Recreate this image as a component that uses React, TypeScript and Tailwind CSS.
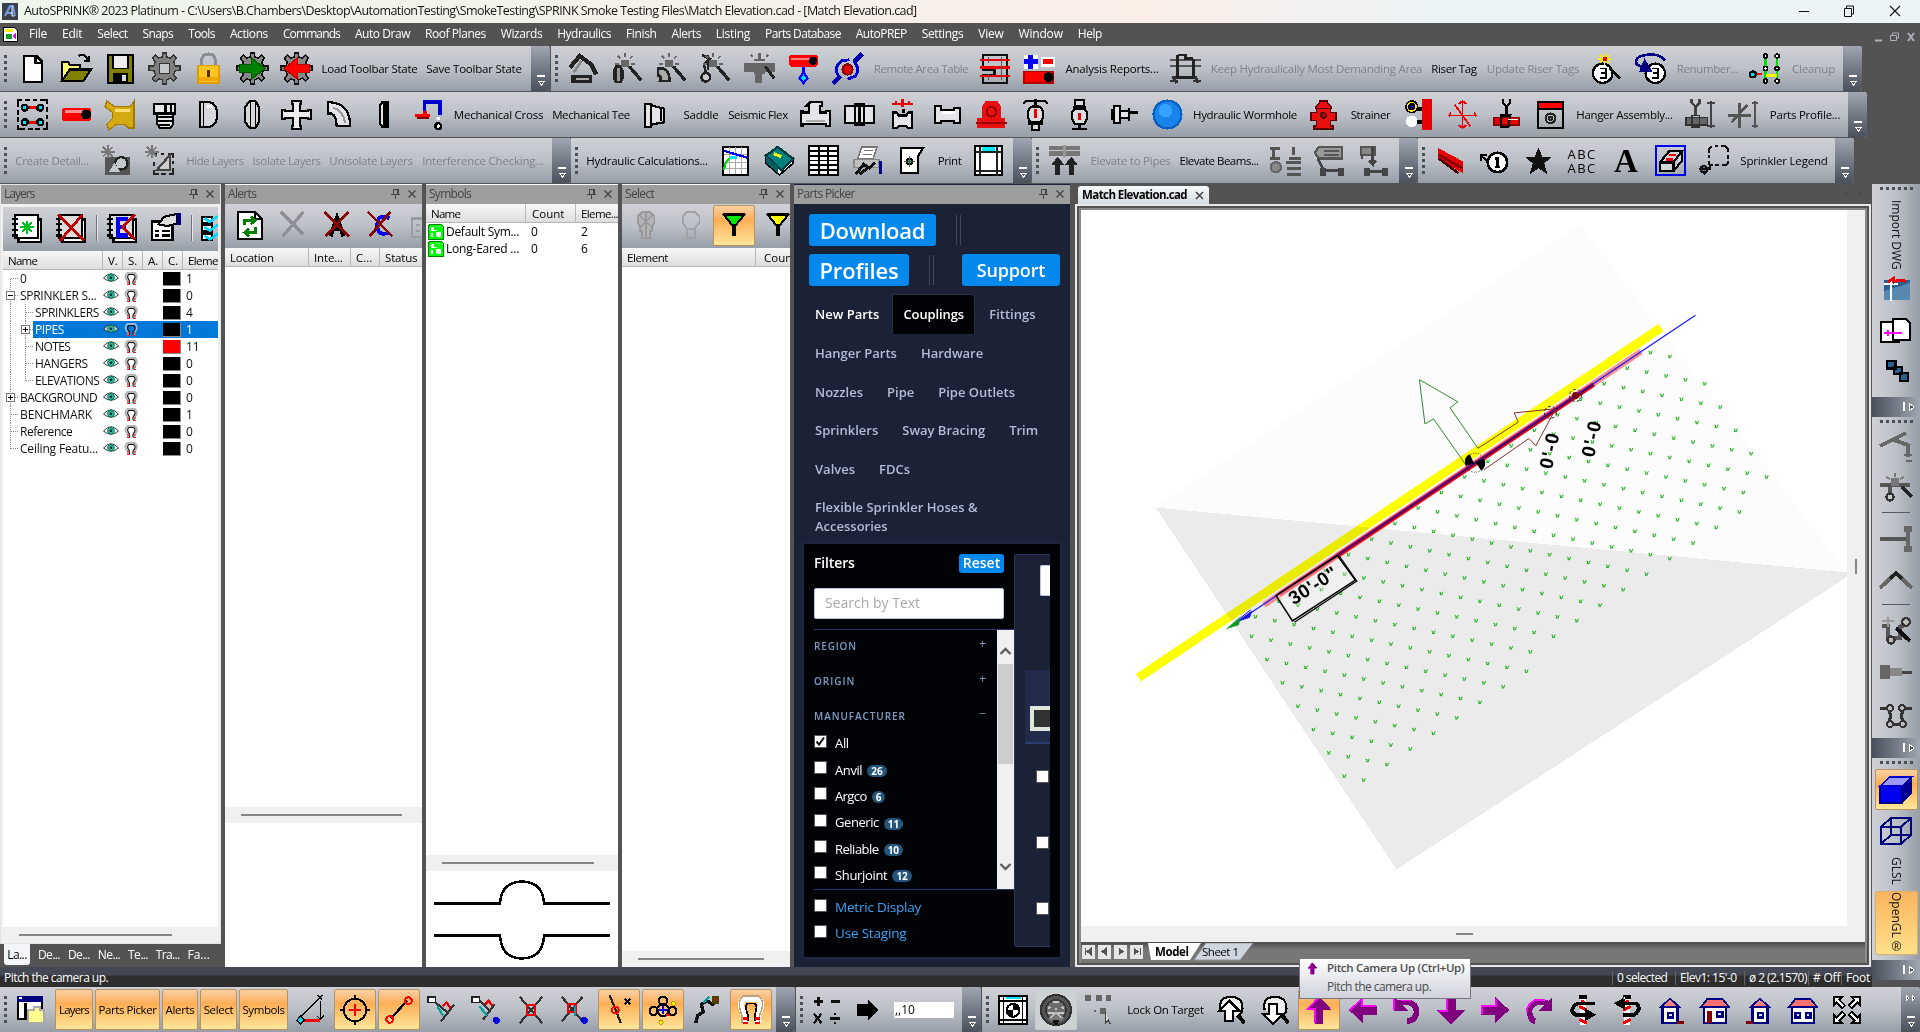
import { useLayoutEffect, useRef, useState } from "react";
import type { ReactNode } from "react";

type Layer = [string, string?, string?, number?];

const c = (x: number, y: number, r: number) =>
  `M${x - r} ${y}a${r} ${r} 0 1 0 ${2 * r} 0a${r} ${r} 0 1 0 ${-2 * r} 0z`;

const GEAR =
  "M7 0h2v2l2 .6 1.6-1.6 1.6 1.6L12.700 4.600l.9 2.100H16v2.400h-2.400l-.9 2.200 1.500 1.600-1.600 1.600-1.600-1.500L9 14v2H7v-2l-2-.7-1.700 1.500-1.500-1.600 1.500-1.900L2.500 9H0V6.700h2.500l.8-2.100-1.500-1.900 1.600-1.600L5 2.600 7 2z";
const ARROW_UP = "M8 1L14 7.500h-4V15H6V7.500H2z";
const WAND: Layer = ["M9 7L15 14", undefined, "#222", 1.7];
const SPARK: Layer = ["M5 4h3.500v3H5zM6.700 0v2M1.500 5.500h2M10 5.500h2M3 1.500l1.200 1.200M10.500 1.500L9.300 2.700", "#666", "#666", 0.9];

const ICONS: Record<string, Layer[]> = {
  new: [["M3.5 1.5h6.500l3 3v10.500h-9.500z", "#fff", "#000"], ["M9.500 1.500v3.500h3.500", undefined, "#000"]],
  open: [
    ["M.5 14V4.500h3l1 1.500h5.500v3", "#ffff70", "#000"],
    ["M.5 14.500l4-6h11l-4 6z", "#808000", "#000"],
    ["M9 1.500q4-1.500 5 2.500M12 4h3M14.500 1.500v3", undefined, "#000"],
  ],
  save: [
    ["M1.500 1h13v14.500h-13z", "#808000", "#000"],
    ["M4 1h8v7H4z", "#ececec", "#000", 0.8],
    ["M4 10.500h8v5H4z", "#000"],
    ["M9 11.500h2v3H9z", "#ddd"],
  ],
  gear: [[GEAR, "#808080", "#333", 0.7], ["M5.500 5.500h5v5h-5z", "#c5c8cd", "#333", 0.8]],
  lock: [
    ["M4.500 8V4q0-3.500 3.500-3.500t3.500 3.500v4", undefined, "#8a9096", 1.6],
    ["M2.500 6.500h11v9h-11z", "#ffc522", "#e39a00", 0.8],
    ["M3 13.500h10", undefined, "#f0a800", 2],
    ["M8 9v3.500", undefined, "#553300", 1.4],
  ],
  gearIn: [[GEAR, "#888", "#111", 0.8], ["M1.500 6h6V2.500L14.500 8 7.500 13.500V10h-6z", "#008000", "#005500", 0.6]],
  gearOut: [[GEAR, "#888", "#111", 0.8], ["M14.500 6h-6V2.500L1.500 8l7 5.500V10h6z", "#ff0000", "#b00000", 0.6]],
  crane: [
    ["M1 7.500L6 1.500l6 4.500 2.500 5", undefined, "#222", 2.2],
    ["M1.500 11.500h11v4h-11z", "#222"],
    ["M4 13.500h7", undefined, "#aaa", 1.2],
    ["M3 10L7 4", undefined, "#888", 1.4],
  ],
  wandOval: [["M2 7h2.500v8H2zM2 7l-1 2v4l1 2M4.500 7l1 2v4l-1 2", "#999", "#222"], SPARK, WAND],
  wandElbow: [["M1 8q6-1 6 6.500H2q1-3-1-3z", "#aaa", "#222", 1.4], SPARK, WAND],
  wandDrop: [["M1 1l4 2-3 3 1 4M4 1v8", undefined, "#222", 1.2], [c(3, 12.500, 2.200), "#ccc", "#222", 1.4], SPARK, WAND],
  wandTee: [["M0 5h16v5h-5v1H9.500v4.500h-4V11H5v-1H0z", "#666"], ["M5 3.500h6M8 0v4M3.500 1l1 1M12.500 1l-1 1", undefined, "#666"], ["M11 7l4.500 6", undefined, "#222", 1.5]],
  pipeDrop: [
    ["M1.500 1h13l1 1v4l-1 1h-13l-1-1V2z", "#f00"],
    ["M1.500 3h10", undefined, "#ff8080", 1],
    [c(13, 4, 2.200), "#000"],
    ["M8 7v5", undefined, "#00f", 1.2],
    ["M8 10l2 3-2 2.500-2-2.500z", "#00d8ff", "#00f"],
  ],
  blueHub: [
    ["M.5 15.500L4.500 12M11.500 4.500L15.500 .5", undefined, "#0000b0", 2.2],
    ["M4 12.500Q0 8 5 4l4-.5M11 4q4 4 1 8l-4 1.500", undefined, "#0000d0", 1.5],
    [c(8, 8.500, 2.600), "#e00000", "#800"],
  ],
  redTable: [
    ["M1.500 1h12.500v14.500H1.500v-4h6v-3h-6z", undefined, "#111", 1.4],
    ["M0 3.500h15.500M0 7.500h15.500M0 12h15.500", undefined, "#e00", 1.2],
    ["M4.500 2v3M11 2v12M4.500 11v3", undefined, "#555", 0.6],
  ],
  plusPipe: [
    ["M0 1h7v7H0zM9 2h7v5H9z", "#fff"],
    ["M3.500 1v7M0 4.500h7", undefined, "#00f", 2.400],
    ["M10 4.500h5", undefined, "#f00", 2.400],
    ["M0 9.500h15v6H0z", "#f00", "#a00", 0.7],
    [c(12.700, 12.500, 2.600), "#000"],
  ],
  grayHead: [
    ["M0 3.500h16M0 6.500h16", undefined, "#555", 1],
    ["M4 1v11M12 3v9M4 1h4v2h4M1 12.500h13", undefined, "#222", 1.4],
    ["M1.500 12l2 3.500M13 12l1.500 3.500M0 14.500h4M12 14.500h4", undefined, "#333", 1.4],
  ],
  tag3wand: [
    [c(6, 10.500, 5), "#fff", "#000", 1.2],
    ["M4.500 8h3v5h-3M5 10.500h2.500", undefined, "#000", 1],
    ["M10 8l5 5", undefined, "#111", 1.5],
    ["M7 0v6M3.500 3h7M4.500 1l5 4M9.500 1l-5 4", undefined, "#ffef00", 0.9],
    ["M6 2h2v2H6z", "#e00"],
  ],
  tag3loop: [
    [c(10.500, 10.500, 5), "#fff", "#000", 1.2],
    ["M9 8h3v5H9M9.500 10.500H12", undefined, "#000", 1],
    ["M15.500 4Q13 0 6 1T1 6l5 2.500", undefined, "#000080", 1.4],
    ["M5 4l3 5H3z", "#000080", "#000080"],
  ],
  net: [
    ["M8 2v13M14 2v13", undefined, "#00e000", 1.1],
    ["M1 11h5", undefined, "#f00", 1.2],
    ["M8 11.500h6", undefined, "#ffff00", 1.5],
    [c(8, 1.500, 1) + c(14, 1.500, 1) + c(8, 8, 1) + c(14, 8, 1) + c(8, 14.500, 1) + c(14, 14.500, 1), "#fff", "#000", 0.9],
    [c(1.500, 11, 1.500), "#00e5ff", "#000"],
  ],
  area: [
    ["M.5 2.500v-2h2M4 .5h2.500M8 .5h2.500M12 .5h3.500v2M15.500 4v2.500M15.500 8v2.500M15.500 12v3.500h-2M12 15.500H9.500M8 15.500H5.500M4 15.500H.5v-2M.5 12V9.500M.5 8V5.500M.5 4V2", undefined, "#000", 1.1],
    ["M3 4.500h10M3 12h10", undefined, "#e00", 1.8],
    [c(4, 4.500, 1.500) + c(12, 4.500, 1.500) + c(4, 12, 1.500) + c(12, 12, 1.500), "#00e5ff", "#000"],
  ],
  redPipe: [["M1.500 4.500h13l1 1v5l-1 1h-13l-1-1v-5z", "#f00"], ["M2 6.500h10", undefined, "#ff9090", 1.2], [c(13, 8, 2.600), "#000"]],
  yellowTee: [["M1 1l4 3h8l2-3v14h-3l-2-2H6l-4 3-1-3 3-3V7L0 4z", "#d4a912", "#a07a00", 0.6], ["M5 6h8", undefined, "#ffe070", 1.5]],
  cap: [
    ["M4 7.500v5l1.500 2.500h5.500l1.500-2V7.500z", "#e8e8e8", "#000", 0.9],
    ["M2.500 2.500h11v5h-11z", "#e8e8e8", "#000", 1.2],
    ["M8.500 2.500v5M11.500 2.500v5", undefined, "#000"],
    ["M4.500 9.500h8M4.500 11.500h8M5 13.500h6", undefined, "#000", 1],
  ],
  dshape: [["M3.500 1.500h5q4 1 4 6.500t-4 6.500h-5z", "#d5d7db", "#000"], ["M5.500 2v12", undefined, "#000", 0.8], ["M7 4h3", undefined, "#fff", 1.4]],
  oval: [["M6.500 1h3l2 3.500v7l-2 3.500h-3L4 11.500v-7z", "#d5d7db", "#000"], ["M7 1v14M9.500 1v14", undefined, "#000", 0.9]],
  cross: [["M5.500 1h5v1.500h-.5V6H14V5.500h1.500v5H14V10h-4v4h.5v1.500h-5V14H6v-4H2v.5H.5v-5H2V6h4V2.500h-.5z", "#ededf0", "#000"]],
  elbow: [["M1.500 1.500h2v.500q8 0 9.500 10v2h-7q0-5-2.500-6.500h-2z", "#e4e5e8", "#000"], ["M4 4.500q5 1 6.500 8", undefined, "#999", 1]],
  disc: [["M7 1.500h2.500v13H7l-1.500-2v-9zM8 2v12", "#e6e6e8", "#000"]],
  swing: [
    ["M6 7V1.500h8V8", undefined, "#00c", 1.900],
    ["M1 8.500h8M6 6v4", undefined, "#e00", 2],
    ["M8 10L2 10", undefined, "#800000", 1],
    [c(13, 10, 1), "#fff"],
    [c(13, 14, 1.500), "#fff", "#000"],
  ],
  reducer: [["M1.500 2.500h3l1 1 6 1.500v7l-6 1-1 1.500h-3z", "#e4e5e8", "#000"], ["M4.500 3v11M10 4.500v7", undefined, "#000"]],
  teeFit: [["M5.500 1.500h6v2h-1V7h3V6h2v8h-2v-1h-12v1h-1V6h1v1h3V3.500h-1z", "#e4e5e8", "#000"], ["M3 11.500h10", undefined, "#aaa"]],
  coupling: [["M.5 3.500h15v9H.5z", "#e4e5e8", "#000"], ["M5.500 2.500h5v11h-5zM8 3v10", undefined, "#000"]],
  valveR: [["M2.500 7h2l1 1.500h4l1-1.500h2v8h-2l-1-1H5.500l-1 1H2.500z", "#e4e5e8", "#000"], ["M8 5v2", undefined, "#000"], ["M2 2.500h11M4 1v2M7.500 0v4M11 1v2", undefined, "#e00", 1.1]],
  nipple: [["M1.500 3.500h3v2h7v-1h3v8h-3v-1h-7v1h-3z", "#e4e5e8", "#000"], ["M5 7h7", undefined, "#fff"]],
  redValve: [["M3 4l2-3h6l2 3v6h2v5H.500v-5H3z", "#e81010"], [c(8, 6.500, 2.500), undefined, "#900"], ["M0 12.500h16", undefined, "#900", 1.2]],
  headA: [
    ["M1.500 2.500l1.500-1.500h10l1.500 1.500M8 0v3M6 3.500h4", undefined, "#000"],
    ["M5.500 4q-3 4 0 8h5q3-4 0-8zM4.500 12h7v1h-7zM6 13h4v3H6z", "#dcdde0", "#000"],
    ["M8 5v5", undefined, "#e00", 1.7],
  ],
  headB: [
    ["M5.500.500h5v3h-5zM4.500 4h7M5.500 5q-3 3 0 8h5q3-5 0-8zM4 15.500h8M8 13v2", "#dcdde0", "#000"],
    ["M8 7v4", undefined, "#e00", 1.7],
  ],
  headC: [["M3 3.500h3v9H3zM2 5v6M6 6h5v4H6zM11 4.500v7M11 7h4.500", "#e4e5e8", "#000"]],
  ball: [[c(8, 8, 7.200), "#1684ea", "#0a5fc0"], [c(7, 6, 3.500), "#35a0ff"]],
  hydrant: [["M6 1h4v1l2 2v1H4V4l2-2zM4.500 5h7v2h3v4h-3v3h1.500v1.500h-10V14h1.500v-3h-3V7h3z", "#e80f0f", "#500", 0.8], [c(8, 8.500, 1.500), "#a00", "#300", 0.6]],
  tower: [
    ["M10 0h5v16h-5z", "#e80000"],
    ["M10 5H6M10 12H6", undefined, "#000", 2],
    [c(4.500, 4, 3), "#ffe400", "#000", 0.8],
    [c(4.500, 4, 1.300), "#00f", "#000"],
    [c(4.500, 11.500, 3), "#fff"],
  ],
  redCross: [["M8 1v14M1 8.500h14M4 3l8 11M6 2.500l2-1.500 2 1.500M2 7L1 9M14 7l1 2M6 13.500l2 1.500 2-1.500", undefined, "#e00", 0.9]],
  hangerRed: [
    ["M8 8V4M6 0v2l2 2 2-2V0", undefined, "#000", 1.1],
    ["M1.500 9.500h13v4h-13z", "#e80000", "#800", 0.7],
    ["M5 8.500h5l-1 6H5z", undefined, "#000", 1.1],
    ["M9 10.500h5", undefined, "#fff", 0.8],
  ],
  hangerBox: [["M1.500 1.500h13v13.500h-13z", undefined, "#000", 1.3], ["M2 2h12v2.500H2z", "#f00"], ["M2 5h12", undefined, "#000"], [c(8, 10, 2.500) + c(8, 10, 0.800), undefined, "#222"]],
  hangerGray: [
    ["M6 8V4M4 0v2l2 2 2-2V0M14 1v14M12 2h4M12 14h4", undefined, "#444", 1.3],
    ["M1 9.500h11v4H1z", "#666", "#333", 0.7],
    ["M4 8.500h4v6H4z", undefined, "#333", 1],
  ],
  crossGray: [["M6 2v13M0 8.500h12M2 12l8-9M14 1v14M12.500 2h3M12.500 14h3", undefined, "#555", 1.4]],
  shot: [["M2 6h13v9.500H2z", "#555"], [c(10.500, 9.500, 3.200), "#c4c7cc", "#222"], ["M4 14l3-5 3 5z", "#c4c7cc"], ["M3.500 0v6.500M0 3.500h7M1 1l5 5M6 1L1 6", undefined, "#777", 1]],
  shotSel: [["M4 4.500h2M8 4.500h2M12 4.500h2.500v2M14.500 8v2M14.500 12v3h-2M11 15H8.500M7 15H4.500v-2M4.500 11V9", undefined, "#222", 1.2], ["M6 13l7-8v8z", "#ccc", "#444"], ["M3.500 0v6.500M0 3.500h7M1 1l5 5M6 1L1 6", undefined, "#777", 1]],
  chart: [
    ["M1.500 1h13v14.500h-13z", "#fff", "#000", 1],
    ["M2 5h12M2 9h12M2 12h12M5 1v14M8 1v14M11 1v14", undefined, "#aaa", 0.6],
    ["M2 3l12 3.500", undefined, "#00f", 1.2],
    ["M2 13l1-4 2-2", undefined, "#00e000", 1.2],
    ["M5 6.500h4", undefined, "#00e5ff", 1.2],
  ],
  book: [["M1 5.500v4l7 6 7-6V7l-6 6z", "#f0f0f0", "#000", 0.9], ["M1 5.500l6-4.500 8 6-6 6z", "#008080", "#003c3c"], ["M1 5.500v3.500l6 5.500V11z", "#006060"], ["M5 4.500l4 1.500", undefined, "#ffff00", 1.6]],
  sheet: [["M.5.5h15v15H.5z", "#fff", "#000", 1.3], ["M0 3h16M0 5.500h16M0 8h16M0 10.500h16M0 13h16M5.500 0v16M10.500 0v16", undefined, "#000", 1]],
  printer: [
    ["M5 1h8l-2 6H3z", "#fff", "#777", 0.8],
    ["M6 3h5M5.500 5h5", undefined, "#777", 0.6],
    ["M1 7.500h13v4H1z", "#c0c0c0", "#888", 0.8],
    ["M2 15l4-5 3 2 3-3M4 15l4-3", undefined, "#111", 1.6],
    ["M14.500 8v7", undefined, "#000080", 1.5],
  ],
  plan: [["M2.500 1.500H14l-2.500 4V14.500h-9z", "#fff", "#000"], [c(7, 8.500, 1.500), "#00c8c8", "#000", 0.8], ["M7 5.500v6M4 8.500h6", undefined, "#553", 0.5]],
  print: [["M1 .5h14v15H1z", "#fff", "#000", 1.4], ["M4.500 1h7v2h-7z", "#00e5ff"], ["M1 3.500h14M3.500 1v15M12.500 1v15M1 13.500h14", undefined, "#222", 0.8]],
  lifts: [["M0 1.500h16M0 4.500h16", undefined, "#777", 2.400], ["M4.500 15.500V8M11.500 15.500V8", undefined, "#222", 2.800], ["M1 10.500l3.500-4.500 3.500 4.500zM8 10.500l3.500-4.500 3.500 4.500z", "#222"], ["M8 0v6", undefined, "#999"]],
  beamA: [["M0 2h5M0 7h5M10 7h6M8 9h8M9 12h7M9 15h7", undefined, "#555", 1.5], [c(3, 11.500, 2.600), "#888", "#666"], ["M2 2v4M12 1v4", undefined, "#555", 1.5]],
  beamB: [["M2.500 1h12v6h-12l-2-3z", "#999", "#555"], ["M5 3h8M5 5h8", undefined, "#555"], ["M2 7l3 6h9", undefined, "#444", 1.4], ["M3 12h3v4H3zM12.500 12h3v4h-3z", "#444"]],
  beamC: [["M1.500 1h7v4h-7z", "#888", "#555"], ["M2 5V7M7.500 1v9l-2-2M7.500 10l2-2M4 13.500h10", undefined, "#444", 1.4], ["M3 12h3v4H3zM12.500 12h3v4h-3z", "#444"]],
  ibeam: [["M1.500 1.500l13 7v6l-13-7z", "#e80000"], ["M2 5l12 7", undefined, "#800", 1.5], ["M2 7l10 7.500", undefined, "#400", 1.3]],
  callout: [[c(9.500, 9, 5), "#fff", "#000", 1.3], ["M5 9L1 5.500M1 8V5h3", undefined, "#000", 1], ["M8 7h1.500v4.500M8 11.500h3", undefined, "#000", 1.2]],
  star: [["M8 1.500l2 4.500h5l-4 3.500 1.500 5.500L8 12l-4.500 3L5 9.500 1 6h5z", "#111"]],
  iso: [["M.5 0v16M15.500 0v16", undefined, "#0000f0", 1.1], ["M0 .5h16M0 15.500h16", undefined, "#0000f0", 1.1], ["M2.500 9h7v4.500h-7zM2.500 9l5-6h6.500L9.500 9M14 3v5l-4.500 5.500", "#d4d6da", "#000"], ["M7 5h4M5.500 7.500h4", undefined, "#e00"]],
  cloud: [["M5 4V2l1.500-1.500M8 .5h2M11.500 .5h2l1.500 1.500v1.500M15 5v2M15 8.500v1l-1.500 1H12M10.500 10.500h-2M7 10.500H6L5 9.500V8M5 6.500V5", undefined, "#111", 1.100], [c(2.500, 12.500, 1.700), "#777", "#111"], ["M0 12.500h6M2.500 15l3.500-4", undefined, "#111", 1]],
  layerNew: [
    ["M3.500 3.500h12v12h-12z", "#fff", "#000"],
    ["M1.500 1h12.500v12.500H1.500z", "#fff", "#000"],
    ["M0 3h3M0 6h3M0 9h3M0 12h3", undefined, "#000"],
    ["M8 4v7M4.500 7.500h7M5.500 5l5 5M10.500 5l-5 5", undefined, "#00c020", 0.9],
  ],
  layerDel: [
    ["M3.500 3.500h12v12h-12z", "#fff", "#000"],
    ["M1.500 1h12.500v12.500H1.500z", "#ddd", "#000"],
    ["M0 3h3M0 6h3M0 9h3M0 12h3", undefined, "#000"],
    ["M1 1l14 13.500M14 1L2 15", undefined, "#c00000", 1.500],
  ],
  layerE: [
    ["M3.500 3.500h12v12h-12z", "#fff", "#000"],
    ["M1.500 1h12.500v12.500H1.500z", "#ddd", "#000"],
    ["M0 3h3M0 6h3M0 9h3M0 12h3", undefined, "#000"],
    ["M11 3H6v9h5M6 7.500h4", undefined, "#0000f0", 2.200],
    ["M8 7.500L15 1M8 7.500L15 14", undefined, "#c00000", 1.500],
  ],
  props: [
    ["M.5 4.500h11v10H.5z", "#fff", "#000"],
    ["M2 9.500h2M6 9.500h4M2 12h2M6 12h4", undefined, "#000"],
    ["M4 6l3-4 7-1.500v5L9 7z", "#ddd", "#000"],
    ["M15 0v6.500", undefined, "#000080", 2],
  ],
  checks: [["M.5 1.500h6v3.500H.5zM.5 6.500h6V10H.5zM.5 11.500h6V15H.5z", "#fff", "#000", 1.200], ["M2 2.500l3 2 5-3.500M2 7.500l3 2L10 6M2 12.500l3 2 5-3.500", undefined, "#00d8ff", 1.500]],
  refresh: [["M1.500 1h9l4 4v10.500h-13z", "#fff", "#000"], ["M10.500 1v4h4", undefined, "#000"], ["M5 8V5.500h5M11 9v3H6M8.500 3.500l2.500 2-2.500 2M7.500 10l-2.500 2L7.500 14", undefined, "#008000", 1.300]],
  xGray: [["M1 1l12 12M13 1L2 14", undefined, "#8d8f94", 1.7]],
  aX: [["M4.500 14L8 4l3.500 10M6 10h5", undefined, "#000", 2.200], ["M1.500 1l13 13M14 1L2 14", undefined, "#8b0000", 1.500]],
  cX: [["M12.500 4.500Q6 1.500 6 8t6.500 4", undefined, "#0000f0", 2], ["M1 1l13 13M13 1L2 14", undefined, "#8b0000", 1.500]],
  propsGray: [["M2.500 4.500h11v10h-11z", undefined, "#9a9da2", 1.200], ["M5 8h2M5 11h2M8 8h4", undefined, "#9a9da2"]],
  bulbA: [["M5 9L3.500 6.500v-3L6 1h4l2.500 2.500v3L11 9v2h-1v4H6v-4H5z", "#b4b5b8", "#999", 1], ["M5 3l6 6M11 3L5 9M8 1v14", undefined, "#999", 0.8]],
  bulbB: [["M5 9L3.500 6.500v-3L6 1h4l2.500 2.500v3L10 10H6zM6 10v5h4v-5", undefined, "#a0a2a6", 1]],
  funnelG: [["M2.500 2.500h11L9 8H7z", "#00e800", "#000"], ["M2 2h12", undefined, "#000"], ["M8 8v6", undefined, "#000", 2.200]],
  funnelY: [["M2.500 2.500h11L9 8H7z", "#ffff00", "#000"], ["M2 2h12", undefined, "#000"], ["M8 8v6", undefined, "#000", 2.200]],
  win: [["M.5 2h13v11H.5z", "#fff", "#000"], ["M0 .500h14v3H0z", "#000080"], ["M1 1.500h1.500", undefined, "#fff"], ["M4.500 4v9", undefined, "#000"], ["M6 8h3V6.500h3.500V8h2v7H6z", "#ffff90", "#aaa", 1.100]],
  tri: [["M2 12L12 2", undefined, "#000", 0.9], ["M13 3v9", undefined, "#000", 0.9], ["M3 13.500h10", undefined, "#f00", 1.300], ["M2.500 11l2 2.500-2 2-2-2z", "#00d8e8", "#000", 0.7], ["M11.500 0l2.500 2.500M14 0l-2.500 2.500M11 11l2 2 2-2", undefined, "#000", 0.7]],
  centre: [[c(8, 8, 6), undefined, "#000", 1.100], ["M8 5v6M5 8h6", undefined, "#f00", 1.200], ["M8 0v2M8 14v2M0 8h2M14 8h2", undefined, "#000", 0.8]],
  ends: [["M3.500 12.500l9-9.500", undefined, "#000", 1.200], [c(3, 13, 1.800) + c(13, 3, 1.800), undefined, "#f00", 1.100]],
  perp: [["M4 4l6 5M7 14l7-9", undefined, "#333", 1.200], ["M5 6l3 5", undefined, "#00a0a0", 1.200], ["M8 6l2-2 2 3", undefined, "#e00"], ["M0 1h4v3H0z", "#fff", "#222", 0.8]],
  perpB: [["M4 3l5 5M6 13l6-8", undefined, "#333", 1.200], ["M4 6l4 5", undefined, "#00a0a0", 1.200], ["M7 5l2-2 2 3", undefined, "#e00"], ["M0 1h4v3H0z", "#fff", "#222", 0.8], [c(13, 13.500, 1.800), "#0000e0"]],
  inter: [["M2 1l12 14M14 1L2 15", undefined, "#333", 1.200], ["M6 5.500h4v5H6z", undefined, "#e00", 1.200]],
  interB: [["M1 1l11 13M12 1L1 14", undefined, "#333", 1.200], ["M4.500 5h4v4h-4z", undefined, "#e00", 1.100], ["M8 11V6", undefined, "#00a0a0"], [c(13, 13.500, 1.800), "#0000e0"]],
  near: [["M3 0l6 15", undefined, "#222", 1.200], [c(6, 8, 1.800), undefined, "#f00", 1.100], ["M11 2l3 3M14 2l-3 3", undefined, "#000", 0.9]],
  quad: [[c(8, 8, 3.200), undefined, "#000"], [c(8, 3, 2.200) + c(3, 8.500, 2.200) + c(13, 8.500, 2.200), undefined, "#000"], ["M6 8h4M8 6v4", undefined, "#00f"], [c(13.500, 4.500, 1.200) + c(7, 14.500, 1.200), "#ffe800", "#a90", 0.500], ["M9.500 10.500h2", undefined, "#e00"]],
  poly: [["M2 15l1-4 3-2-1-4 3-2 3 2 2-3", undefined, "#111", 1.800], ["M6 4l3-3", undefined, "#00a0a0"], ["M11 1h3v3h-3z", "#a02010", "#440"]],
  magnet: [["M4.500 15V11Q1 4 4.500 1.800h7q3.500 2.500 0 9.200v4", undefined, "#fff", 3.400], ["M3.200 15v-4Q0 3 4 .500h8q4 2.500 .500 10.500v4", undefined, "#b9a080", 0.800], ["M6.500 14v-3Q4 5 6.500 4.500h3q2.500.500 .500 6.500v3", undefined, "#000", 0.900], ["M3.500 12.500h3M3.500 15h3M10 12.500h3M10 15h3", undefined, "#e00", 1.200]],
  math: [["M1 3.500h5M3.500 1v5M10 3.500h5M1 10l4 5M5 10l-4 5M9.500 12.500h5.500", undefined, "#111", 1.200], [c(12.200, 10, 0.600) + c(12.200, 15, 0.600), "#111"]],
  right: [["M2.500 5.500h6v-2L13 8l-4.500 4.500v-2h-6z", "#000", "#000"]],
  target: [["M.5.500h15v15H.5z", "#fff", "#000", 1.300], ["M4 1h8v1H4z", "#00e5ff"], ["M1 3.200h14M3 1v15M13 1v15M1 13.300h14", undefined, "#000", 0.8], [c(8, 8.200, 3.400), "#fff", "#000", 1.200], ["M8 5v3.200h3.400A3.400 3.400 0 0 0 8 5zM8 11.500V8.200H4.600A3.400 3.400 0 0 0 8 11.500z", "#000"]],
  wheel: [[c(8, 8, 7.500), "#555", "#333"], [c(8, 8, 5), "#6c6c6c", "#333", 0.800], ["M8 8L4 12l1 1.500h6l1-1.500z", "#777"], ["M6.500 4h3M5 6.500l-1 1M11 6.500l1 1M4 9.500h3M9 9.500h3M8 7v1M8 9l-2.500 3M8 9l2.500 3", undefined, "#c8c8c8", 0.800], ["M6.500 13h3l-.5 2.500H7z", "#111"]],
  pick: [["M0 0h3v3H0zM6 0h3v3H6zM11 0h3v3h-3zM8 7h3v3H8z", "#666"], ["M5 8.500h1", undefined, "#666"], ["M11 9v6l1.500-1.500 1 2", "#ddd", "#444", 0.9]],
  magUp: [["M2.500 8Q1 1 8 1t6 8L11 12", "#f0f0f0", "#000"], ["M12 11l3 4", undefined, "#000", 2], ["M7 3l5.500 5.500H9V14H5V8.500H1.500z", "#fff", "#000"]],
  magDown: [["M2.500 8Q1 1 8 1t6 8L11 12", "#f0f0f0", "#000"], ["M12 11l3 4", undefined, "#000", 2], ["M7 15.500l5.500-5.500H9V5H5v5H1.500z", "#fff", "#000"]],
  aUp: [[ARROW_UP, "#800080", "#800080", 0.600], ["M8 1L2 7.500h4V15", undefined, "#f0f", 0.900]],
  aLeft: [["M1 8L7.500 2v4H15v4.500H7.500V14z", "#800080", "#800080", 0.800], ["M15 6H7.500V2L1 8", undefined, "#f0f", 0.900]],
  aDown: [["M8 15l6.500-6.500H10V1H6v7.500H1.500z", "#800080", "#800080", 0.800], ["M6 1v7.500H1.500", undefined, "#f0f", 0.900]],
  aRight: [["M15 8L8.500 2v4H1v4.500h7.500V14z", "#800080", "#800080", 0.800], ["M1 10V6h7.500V2", undefined, "#f0f", 0.900]],
  aCcw: [["M3 4h6q4.500 1 4 5.500-.500 4-5 4.500", undefined, "#800080", 3], ["M1 1v7.500h7.500z", "#800080"], ["M1 8V1M5 3h5", undefined, "#f0f", 0.900]],
  aCw: [["M13 4H7Q2.500 5 3 9.500q.500 4 3 4.500", undefined, "#800080", 3], ["M15 1v7.500H7.500z", "#800080"], ["M11 2.500H6Q1.500 5 1.500 9", undefined, "#f0f", 0.900]],
  spinA: [["M8 0v16", undefined, "#fff", 3], ["M7 3l3 2M6 6l4 2M6 13l4 2", undefined, "#f00", 1.600], ["M14.500 4.500H5Q0 8 4 10.500h5", undefined, "#000", 2], ["M9 7l6 3.500-6 3.500zM6 0h4v2H6z", "#000"]],
  spinB: [["M8 0v16", undefined, "#fff", 3], ["M9 3L6 5M10 6L6 8M10 13l-4 2", undefined, "#f00", 1.600], ["M6 10.500h6q4-3 1-6H4", undefined, "#000", 2], ["M7 1L1 4.500 7 8zM6 0h4v2H6z", "#000"]],
  homeA: [["M3.500 6.500h8V15h-8z", "#fff", "#000080", 1.200], ["M2.500 6.500L7.500 2l5 4.500z", "#ff8080", "#000080", 1], ["M6.500 9.500h2.500v2.500H6.500z", "#c8f0ff", "#000080"], ["M11 14.500h4", undefined, "#800000", 1.600]],
  homeB: [["M2 6.500h12V15H2z", "#fff", "#000080", 1.200], ["M.500 6.500L4 2h8l3.500 4.500z", "#ff7070", "#000080", 1], ["M3.500 8.500h3V15h-3z", "#800000"], ["M9 9h3v2.500H9z", "#c8f0ff", "#000080"]],
  homeC: [["M4.500 6.500h8V15h-8z", "#fff", "#000080", 1.200], ["M3.500 6.500L8.500 2l5 4.500z", "#ff8080", "#000080", 1], ["M7.500 9.500h2.500v2.500H7.500z", "#c8f0ff", "#000080"], ["M1 14.500h4", undefined, "#800000", 1.600]],
  homeD: [["M2 6.500h12V15H2z", "#fff", "#000080", 1.200], ["M.500 6.500L4 2h8l3.500 4.500z", "#ff7070", "#000080", 1], ["M4 9.500h2.500V12H4zM9.500 9.500h2.500V12H9.500z", "#c8f0ff", "#000080"]],
  expand: [
    ["M1 5.500V1h4.500L4 2.500 7 5.500 5.500 7 2.500 4zM15 5.500V1h-4.500L12 2.500 9 5.500 10.500 7l3-3zM1 10.500V15h4.500L4 13.500 7 10.500 5.500 9l-3 3zM15 10.500V15h-4.500l1.500-1.500-3-3L10.500 9l3 3z", "#fff", "#000", 0.900],
  ],
  dwg: [["M2 3.500h13v10H2z", "#2a5f92"], ["M2 9l13-4v8.500H2z", "#5688b0"], ["M5.500 3v11M2 5.500h7", undefined, "#fff", 1], ["M4 4.500l3-2v2q4-2 6 0", undefined, "#e00", 1.400]],
  pages: [["M.5 4h7l2 2v8h-9z", "#fff", "#000", 1], ["M6.500 2.500H13l2 2V13H6.500z", "#fff", "#000", 1.200], ["M2 9.500h9M4 8v3", undefined, "#f0f", 1.100]],
  cubes: [["M3 3h4.500v4H3zM6.500 6H11v4H6.500zM10 9.500h4v4h-4z", "#2a5f92", "#000", 1.100]],
  vArm: [["M0 7.500L13 1M6 4l9 3.500M14 7v6", undefined, "#666", 2], ["M12 12h4M13 15h3", undefined, "#666"]],
  vWand: [["M0 6h15M5 6v4", undefined, "#555", 1.900], [c(5, 12, 1.800), "#ccc", "#333"], ["M6 3h3v3H6zM7.500 0v2M3 2l2 1M12 2l-2 1", "#777", "#777", 0.800], ["M11 7l5 5", undefined, "#222", 1.800]],
  vTee: [["M0 8h13", undefined, "#555", 1.600], ["M14 4v8", undefined, "#666", 2], ["M12 3h4M12 13h4", undefined, "#666", 3]],
  vChev: [["M0 12l8-7.500 8 7.500", undefined, "#666", 2], ["M5 7.500l3-3 3 3", undefined, "#222", 2]],
  vMess: [["M1 5.500h3v6h6V6l4-2", undefined, "#555", 2.300], [c(13, 3.500, 1.900) + c(5.500, 12.500, 1.800), "#bbb", "#333"], ["M8 6.500l7 6.500", undefined, "#111", 2], ["M4 1v5M1 3h6", undefined, "#999"]],
  vJack: [["M0 4.500h5v7H0z", "#666"], ["M5 6h6v4H5z", "#888"], ["M11 8h5", undefined, "#444", 1.500]],
  vNodes: [["M0 4h4l1.500 4L4 12M16 4h-4l-1.500 4 1.500 4M4 12h8", undefined, "#333", 1.500], [c(5, 4, 1.600) + c(11, 4, 1.600) + c(5, 12, 1.600) + c(11.500, 12, 1.600), "#bbb", "#333"]],
  cube: [["M0 6h11v8.500H0z", "#0000f0", "#000080", 0.700], ["M0 6l5-4.500h11L11 6z", "#9a9af8", "#0000d0", 0.700], ["M16 1.500v8l-5 5V6z", "#000090"]],
  wire: [["M.5 6h10v8.500H.500zM5.500 1.500h10V10h-10zM.500 6l5-4.500M10.500 6l5-4.500M.500 14.500l5-4.500M10.500 14.500l5-4.500", undefined, "#00007a", 1]],
};

function Icon({ name, cls = "h-8 w-8" }: { name: string; cls?: string }) {
  return (
    <svg viewBox="0 0 16 16" className={`shrink-0 overflow-visible ${cls}`} shapeRendering="crispEdges">
      {ICONS[name].map(([d, f, s, w], i) => (
        <path key={i} d={d} fill={f ?? "none"} stroke={s ?? "none"} strokeWidth={w ?? 1.15} />
      ))}
    </svg>
  );
}

/* Text tightened or loosened so that its ink spans exactly w pixels. */
function Fit({ w, children, cls = "" }: { w: number; children: string; cls?: string }) {
  const ref = useRef<HTMLSpanElement>(null);
  const [ls, setLs] = useState(0);
  useLayoutEffect(() => {
    if (ref.current) setLs((w - ref.current.offsetWidth) / children.length);
  }, [w, children]);
  return (
    <span ref={ref} className={`inline-block shrink-0 whitespace-nowrap ${cls}`} style={{ letterSpacing: ls }}>
      {children}
    </span>
  );
}

type Item = string | { t: string; w: number; cell: number; off?: boolean };
const T = (t: string, w: number, cell: number, off = false): Item => ({ t, w, cell, off });

function Handle({ more }: { more?: boolean }) {
  return (
    <div className="ml-auto flex w-[19px] shrink-0 flex-col items-center justify-end self-stretch rounded-r-[3px] bg-linear-to-b from-[#a0a7b2] to-[#4a515c] pb-[3px]">
      {more && (
        <svg width="14" height="9" className="mb-[12px]" shapeRendering="crispEdges">
          <path d="M2 1v6l3-3zM8 1v6l3-3z" fill="#555" stroke="#fff" />
        </svg>
      )}
      <svg width="12" height="14" shapeRendering="crispEdges">
        <path d="M2 2h8" stroke="#fff" strokeWidth="2" />
        <path d="M3 7h7l-3.500 4z" fill="#555" stroke="#fff" />
      </svg>
    </div>
  );
}

const Grip = () => <div className="ml-[4px] h-[27px] w-[6px] shrink-0 border-l-[3px] border-dotted border-[#4b4f57]" />;

function Bar({ w, items, children, cls = "", more }: { w: string; items?: Item[]; children?: ReactNode; cls?: string; more?: boolean }) {
  return (
    <div className={`flex h-[45px] shrink-0 items-center overflow-hidden rounded-r-[3px] bg-linear-to-b from-[#cfd1d6] via-[#bcc0c7] to-[#979ea8] ${w} ${cls}`}>
      <Grip />
      {items?.map((it, i) =>
        typeof it === "string" ? (
          it === "ABC" ? (
            <div key={i} className="flex w-11 shrink-0 flex-col items-center text-[13px] leading-[14px]">
              <Fit w={29}>ABC</Fit>
              <Fit w={29}>ABC</Fit>
            </div>
          ) : it === "A" ? (
            <div key={i} className="flex w-11 shrink-0 justify-center font-['Liberation_Serif',serif] text-[33px] leading-8 font-bold">A</div>
          ) : (
            <div key={i} className="flex w-11 shrink-0 justify-center">
              <Icon name={it} cls="h-[31px] w-[31px]" />
            </div>
          )
        ) : (
          <div key={i} style={{ width: it.cell }} className={`flex shrink-0 justify-center ${it.off ? "text-[#7f8287]" : "text-black"}`}>
            <Fit w={it.w}>{it.t}</Fit>
          </div>
        ),
      )}
      {children}
      <Handle more={more} />
    </div>
  );
}

const MENU: [string, number][] = [
  ["File", 18], ["Edit", 20], ["Select", 30], ["Snaps", 31], ["Tools", 27], ["Actions", 38], ["Commands", 57], ["Auto Draw", 55],
  ["Roof Planes", 61], ["Wizards", 41], ["Hydraulics", 54], ["Finish", 31], ["Alerts", 29], ["Listing", 34], ["Parts Database", 76],
  ["AutoPREP", 51], ["Settings", 42], ["View", 25], ["Window", 44], ["Help", 24],
];

function PanelHead({ title, w }: { title: string; w: number }) {
  return (
    <div className="flex h-[19px] shrink-0 items-center bg-[#9c9f9e] pr-[5px] pb-[2px] pl-[3px] text-[12px] text-[#444]">
      <Fit w={w}>{title}</Fit>
      <svg className="ml-auto" width="26" height="12" fill="none" stroke="#444">
        <path d="M2.500 1.500h5v5h-5zM6.500 1.500v5M0 6.500h9M4.500 7v4" shapeRendering="crispEdges" />
        <path d="M17.500 2.500l7 7M24.500 2.500l-7 7" strokeWidth="1.400" />
      </svg>
    </div>
  );
}

const Col = ({ cls, children }: { cls: string; children?: ReactNode }) => (
  <div className={`flex shrink-0 items-center overflow-hidden border-r border-[#b9b9b9] pt-[2px] whitespace-nowrap ${cls}`}>{children}</div>
);

const HeadRow = ({ children }: { children: ReactNode }) => (
  <div className="flex h-[19px] shrink-0 overflow-hidden border-b border-[#b5b5b5] bg-linear-to-b from-[#f7f7f7] to-[#dedede] text-[11.5px] text-black">{children}</div>
);

const LAYERS: [string, number, string, string?][] = [
  ["0", 0, "1"], ["SPRINKLER S...", 0, "0", "-"], ["SPRINKLERS", 1, "4"], ["PIPES", 1, "1", "+"], ["NOTES", 1, "11"], ["HANGERS", 1, "0"],
  ["ELEVATIONS", 1, "0"], ["BACKGROUND", 0, "0", "+"], ["BENCHMARK", 0, "1"], ["Reference", 0, "0"], ["Ceiling Featu...", 0, "0"],
];
const LAYER_W = [6, 76, 64, 29, 35, 53, 64, 77, 72, 52, 78];

function LayerRow({ i }: { i: number }) {
  const [name, depth, count, box] = LAYERS[i];
  const sel = name === "PIPES";
  return (
    <div className="flex h-[17px] items-center">
      <svg width={depth ? 30 : 15} height="17" className="shrink-0" shapeRendering="crispEdges">
        <g stroke="#8a8a8a" strokeDasharray="1 1" fill="none">
          <path d={i === 0 ? "M7.500 9v8" : i === 10 ? "M7.500 0v9" : "M7.500 0v17"} />
          {!depth && <path d="M8 8.500h7" />}
          {depth > 0 && <path d={i === 6 ? "M22.500 0v9M23 8.500h7" : "M22.500 0v17M23 8.500h7"} />}
        </g>
        {box && (
          <g transform={`translate(${depth ? 18 : 3} 4)`}>
            <path d="M.5.5h8v8h-8z" fill="#fff" stroke="#777" />
            <path d={box === "+" ? "M2 4.500h5M4.500 2v5" : "M2 4.500h5"} stroke="#000" />
          </g>
        )}
      </svg>
      <div className={`flex h-[17px] grow items-center pl-[2px] ${sel ? "bg-[#0078d7] text-white" : "text-[#111]"}`}>
        <div className={`shrink-0 ${depth ? "w-[68px]" : "w-[83px]"}`}>
          <Fit w={LAYER_W[i]}>{name}</Fit>
        </div>
        <svg width="60" height="17" className="shrink-0">
          <path d="M.5 8Q8-.5 15.500 8Q8 14.500 .5 8z" fill={sel ? "#b8d4ec" : "#fff"} stroke="#333" />
          <circle cx="8" cy="7.700" r="3.400" fill="#35b494" stroke="#0a7a60" />
          <circle cx="8" cy="7.700" r="1.200" fill="#023" />
          <path d="M25 15V12Q20.500 6 24.500 3h7.500Q36 6 31.500 12v3" fill="none" stroke={sel ? "#8fb9dc" : "#b4b4b4"} strokeWidth="2" />
          <path d="M26.500 14v-3Q23 6.500 26 4.500h4.500Q34 6.500 30 11v3" fill="none" stroke="#111" strokeWidth="1.100" />
          <path d="M24 12h3M24 14.500h3M30 12h3M30 14.500h3" stroke="#d22" strokeWidth="1.200" />
        </svg>
        <div className={`h-[14px] w-[18px] shrink-0 border-r border-b border-[#888] ${name === "NOTES" ? "bg-[#f00]" : "bg-black"}`} />
        <span className="pl-[5px]">{count}</span>
      </div>
    </div>
  );
}

const MiniBar = ({ children }: { children: ReactNode }) => (
  <div className="flex h-[44px] shrink-0 items-center overflow-hidden bg-linear-to-b from-[#cfd1d6] via-[#bcc0c7] to-[#979ea8] pb-[2px]">{children}</div>
);

const Splitter = ({ w }: { w: string }) => (
  <div className="flex h-[16px] shrink-0 items-center bg-[#f0f0f0] pl-[16px]">
    <div className={`h-[2px] bg-[#868686] ${w}`} />
  </div>
);

const Check = ({ on }: { on?: boolean }) => (
  <span className="flex h-[13px] w-[13px] shrink-0 items-center justify-center border border-[#555] bg-white">
    {on && (
      <svg width="11" height="11" fill="none" stroke="#111" strokeWidth="2">
        <path d="M1.500 5.500l2.500 3 5-7" />
      </svg>
    )}
  </span>
);

const PARTS: [string, number][][] = [
  [["Hanger Parts", 82], ["Hardware", 62]],
  [["Nozzles", 48], ["Pipe", 27], ["Pipe Outlets", 77]],
  [["Sprinklers", 63], ["Sway Bracing", 83], ["Trim", 29]],
  [["Valves", 40], ["FDCs", 31]],
];

const MAKERS: [string, number, string?][] = [["All", 14], ["Anvil", 27, "26"], ["Argco", 32, "6"], ["Generic", 44, "11"], ["Reliable", 44, "10"], ["Shurjoint", 52, "12"]];

function PartsPicker() {
  return (
    <div className="flex h-[783px] w-[276px] flex-col bg-[#1b2236] pt-px">
      <PanelHead title="Parts Picker" w={58} />
      <div className="mt-[10px] flex h-8 items-center pl-[15px] text-white">
        <div className="flex h-8 w-[127px] items-center justify-center rounded-[3px] bg-[#0388ee] text-[22px] font-semibold"><Fit w={106}>Download</Fit></div>
        <div className="ml-[20px] h-[30px] w-[5px] border-x border-[#3e4657]" />
      </div>
      <div className="mt-2 flex h-8 items-center pl-[15px] text-white">
        <div className="flex h-8 w-[100px] items-center justify-center rounded-[3px] bg-[#0388ee] text-[22px] font-semibold"><Fit w={79}>Profiles</Fit></div>
        <div className="ml-[20px] h-[30px] w-[5px] border-x border-[#3e4657]" />
        <div className="ml-[28px] flex h-8 w-[98px] items-center justify-center rounded-[3px] bg-[#0388ee] text-[18px] font-semibold"><Fit w={69}>Support</Fit></div>
      </div>
      <div className="mt-[8px] flex h-[40px] items-center pl-[21px] text-[13px] font-semibold text-white">
        <Fit w={64}>New Parts</Fit>
        <div className="ml-[13px] flex h-[40px] w-[83px] items-center justify-center rounded-t-[3px] border border-b-0 border-[#2c3140] bg-[#020307]"><Fit w={61}>Couplings</Fit></div>
        <Fit w={46} cls="ml-[14px] text-[#b3bcd6]">Fittings</Fit>
      </div>
      <div className="pl-[9px] text-[13px] font-semibold text-[#b3bcd6]">
        {PARTS.map((row, i) => (
          <div key={i} className="flex h-[38.700px] items-center">
            {row.map(([t, w]) => (
              <span key={t} className="px-3"><Fit w={w}>{t}</Fit></span>
            ))}
          </div>
        ))}
        <div className="flex flex-col items-start px-3 pt-[9px] leading-[19px]">
          <Fit w={163}>Flexible Sprinkler Hoses &amp;</Fit>
          <Fit w={73}>Accessories</Fit>
        </div>
      </div>
      <div className="mt-[8px] ml-[10px] flex h-[413px] w-[256px] shrink-0 bg-[#020307] shadow-[0_0_6px_#26314f]">
        <div className="flex w-[210px] shrink-0 flex-col pl-[10px]">
          <div className="mt-[10px] flex h-[19px] items-center text-[14px] text-white">
            <Fit w={41} cls="pb-[1px] font-semibold">Filters</Fit>
            <div className="mr-[10px] ml-auto flex h-[19px] w-[45px] items-center justify-center rounded-[3px] bg-[#0388ee] font-semibold"><Fit w={37}>Reset</Fit></div>
          </div>
          <div className="mt-[15px] flex h-[31px] w-[190px] items-center rounded-[2px] border border-[#bcc8e6] bg-white pl-[10px] text-[14px] text-[#a8a8a8]"><Fit w={95}>Search by Text</Fit></div>
          <div className="mt-[10px] flex h-[261px] border-y border-[#2a3663]">
            <div className="w-[183px] shrink-0 pt-[16px]">
              {([["REGION", 43, "+"], ["ORIGIN", 41, "+"], ["MANUFACTURER", 92, "−"]] as [string, number, string][]).map(([t, w, s], i) => (
                <div key={t} className={`flex items-center text-[10px] leading-none font-semibold text-[#7f9cc4] ${i < 2 ? "h-[35px] pb-[35px]" : "h-[0px]"}`}>
                  <Fit w={w}>{t}</Fit>
                  <span className="mr-[11px] ml-auto pb-[3px] text-[12px] font-normal">{s}</span>
                </div>
              ))}
              <div className="pt-[14px]">
                {MAKERS.map(([t, w, n], i) => (
                  <div key={t} className="flex h-[26.300px] items-center text-[13px] text-white">
                    <span className="pb-[3px]"><Check on={i === 0} /></span>
                    <Fit w={w} cls="mt-[2px] ml-[8px]">{t}</Fit>
                    {n && <span className="mt-[4px] ml-[5px] flex h-[12px] items-center rounded-full bg-[#24567c] px-[4px] text-[10px] font-bold">{n}</span>}
                  </div>
                ))}
              </div>
            </div>
            <div className="flex w-[17px] flex-col items-center bg-[#f0f0f0]">
              <svg width="17" height="34" fill="none" stroke="#606060" strokeWidth="2.400"><path d="M3.500 24l5-5 5 5" /></svg>
              <div className="h-[100px] w-[15px] bg-[#cdcdcd]" />
              <svg className="mt-auto" width="17" height="34" fill="none" stroke="#606060" strokeWidth="2.400"><path d="M3.500 9l5 5 5-5" /></svg>
            </div>
          </div>
          <div className="mt-[4px] text-[13.500px] text-[#3fa3f5]">
            <div className="flex h-[26px] items-center"><span className="pb-[3px]"><Check /></span><Fit w={86} cls="mt-[2px] ml-[8px]">Metric Display</Fit></div>
            <div className="flex h-[26px] items-center"><span className="pb-[3px]"><Check /></span><Fit w={71} cls="mt-[2px] ml-[8px]">Use Staging</Fit></div>
          </div>
        </div>
        <div className="mt-[10px] flex h-[393px] w-[36px] flex-col items-end rounded-l-[3px] border border-r-0 border-[#2a3560] bg-[#1b2236]">
          <div className="mt-[10px] h-[31px] w-[10px] rounded-l-[2px] border border-r-0 border-[#bcc8e6] bg-white" />
          <div className="mt-[74px] flex h-[74px] w-[25px] items-center justify-end border-b-2 border-[#2f3d70] bg-[#222b4b]">
            <div className="mt-[26px] h-[25px] w-[20px] border-[4px] border-r-0 border-[#dfe6dc] bg-[#303234]" />
          </div>
          <div className="flex w-[14px] flex-col gap-[53px] pt-[26px]"><Check /><Check /><Check /></div>
        </div>
      </div>
    </div>
  );
}

const ROWS: [number, number][] = [
  [0, 1], [0, 4], [0, 6], [0, 8], [0, 10], [0, 12], [0, 12], [0, 13], [0, 13], [0, 13], [0, 13], [0, 13], [0, 13], [0, 13], [0, 13], [0, 13],
  [0, 13], [0, 14], [1, 14], [3, 14], [5, 14], [7, 14], [9, 14], [11, 14], [13, 14],
];
const MARKS = ROWS.flatMap(([a, b], j) =>
  Array.from({ length: b - a + 1 }, (_, k) => [1652 + (a + k) * 19.4 - j * 23.3, 351.7 + (a + k) * 3.9 + j * 15.58]),
);

function Drawing() {
  return (
    <svg viewBox="1081 210 768 716" className="h-[716px] w-[768px] bg-white">
      <path d="M1156 507L1581 224L1849 573z" fill="#fcfcfc" />
      <g shapeRendering="crispEdges">
        <path d="M1138.500 678L1662.700 327" stroke="#ff0" strokeWidth="9" />
        <path d="M1156 507.400L1849 572.500V577L1397.300 870.200z" fill="#ebebeb" className="mix-blend-multiply" />
      </g>
      <path d="M1264.600 605L1642.500 351" stroke="#f88b8b" strokeWidth="6" />
      <path d="M1280 594.500L1595 384" stroke="#ee2b3e" strokeWidth="4.500" />
      <path d="M1338 555.600L1595 384" stroke="#e00018" strokeWidth="4" />
      <path d="M1234.800 624L1697 314.500" stroke="#1a1aff" strokeWidth="1.200" />
      <path d="M1338 555.600L1595 384" stroke="#500050" strokeWidth="1.400" />
      <path d="M1239 621l13-9.500-2 6zM1241 618l10-8" fill="#11e" stroke="#11e" />
      <path d="M1227 629l14-12-2 8z" fill="#0a9a20" stroke="#0a9a20" strokeWidth=".6" />
      <g stroke="#12b012" strokeWidth="1" fill="none">
        {MARKS.map(([x, y], i) => (
          <path key={i} d={`M${x - 2} ${y - 1}l1.500 .5l-.5 1.500M${x + 0.5} ${y + 1.500}l1.200-3M${x - 1.500} ${y + 1.500}h2.500`} />
        ))}
      </g>
      <path d="M1479 448L1451 407.500L1458.800 401.400L1420.300 379.200L1425.800 423.600L1434.500 418.600L1467.600 465.700" fill="none" stroke="#2f8a2f" />
      <path d="M1479 448L1519.400 421.700L1515.300 412.500L1557 408.300L1537 445.400L1530 438.200L1485 469.500" fill="none" stroke="#8a3030" />
      <g fill="none" stroke="#222">
        <circle cx="1476" cy="462.500" r="9.500" strokeDasharray="1 1.500" />
        <circle cx="1551.600" cy="412" r="6" strokeDasharray="3 2" />
        <circle cx="1576.800" cy="395" r="6" strokeDasharray="3 2" />
      </g>
      <circle cx="1576.800" cy="395" r="3.500" fill="#7a0010" />
      <path d="M1474.500 463L1467 465Q1465 457 1470.500 454.500zM1477 462L1485 459Q1487.500 465 1482.500 470z" fill="#000" stroke="#000" />
      <path d="M1276.600 595.800L1338 555.600L1356 580.100L1293 621z" fill="#fff" fillOpacity=".25" stroke="#000" strokeWidth="1.500" />
      <path d="M1340 556L1357.500 581L1295 622.500" fill="none" stroke="#000" strokeWidth="1.200" />
      <g className="font-['Liberation_Sans',sans-serif] text-[19px] font-bold" textAnchor="middle">
        <text transform="translate(1317 591) rotate(-33)" textLength="54">30'-0"</text>
        <text transform="translate(1557 452) rotate(-78)" textLength="36">0'-0</text>
        <text transform="translate(1599 440) rotate(-78)" textLength="36">0'-0</text>
      </g>
    </svg>
  );
}

const Btn = ({ children, w, on = true }: { children: ReactNode; w: string; on?: boolean }) => (
  <div className={`mx-px flex h-[41px] shrink-0 items-center justify-center rounded-[2px] border ${w} ${on ? "border-[#b9935a] bg-linear-to-b from-[#f9d0a4] via-[#fcae55] via-35% to-[#fee79a]" : "border-[#c7cdd0] bg-[#ccd2d4]"}`}>
    {children}
  </div>
);

const Cell = ({ name, w = "w-11" }: { name: string; w?: string }) => (
  <div className={`flex shrink-0 justify-center ${w}`}>
    <Icon name={name} cls="h-[30px] w-[30px]" />
  </div>
);

const VGrip = () => <div className="mt-[3px] h-[6px] w-[33px] shrink-0 border-t-[3px] border-dotted border-[#4b4f57]" />;
const VHandle = () => (
  <div className="mt-auto flex h-[20px] w-[48px] shrink-0 items-center justify-end bg-linear-to-r from-[#4a515c] to-[#a0a7b2] pr-[4px]">
    <svg width="14" height="12" shapeRendering="crispEdges"><path d="M2 1v9" stroke="#fff" strokeWidth="2" /><path d="M7 2v8l5-4z" fill="#555" stroke="#fff" /></svg>
  </div>
);
const VBAR = "flex w-[48px] shrink-0 flex-col items-center overflow-hidden bg-linear-to-r from-[#cfd1d6] via-[#bcc0c7] to-[#979ea8]";

const VText = ({ cls = "", children }: { cls?: string; children: string }) => (
  <div className={`text-[12px] leading-4 whitespace-nowrap text-[#111] [writing-mode:vertical-rl] ${cls}`}>{children}</div>
);

export default function App() {
  return (
    <div className="flex h-[1032px] w-[1920px] flex-col overflow-hidden bg-[#535353] font-['Open_Sans','Noto_Sans',sans-serif] text-[11.500px] leading-none text-black">
      <div className="flex h-[23px] shrink-0 items-center bg-linear-to-r from-[#edf6ec] via-[#fbefe8] via-60% to-[#ecf4f7] to-75% pl-[2px]">
        <svg width="16" height="17"><path d="M0 0h16v17H0z" fill="#3c3f4c" /><path d="M3 13L8 3h3l2 10M5 10h6" fill="none" stroke="#6d9be8" strokeWidth="2" /><path d="M10 3v10h2" stroke="#fff" fill="none" /></svg>
        <Fit w={893} cls="ml-[6px] text-[12.500px] text-[#151515]">AutoSPRINK® 2023 Platinum - C:\Users\B.Chambers\Desktop\AutomationTesting\SmokeTesting\SPRINK Smoke Testing Files\Match Elevation.cad - [Match Elevation.cad]</Fit>
        <svg className="mr-[18px] mb-[2px] ml-auto" width="104" height="14" fill="none" stroke="#111">
          <path d="M1 7.500h10" />
          <path d="M46.500 4.500h7v8h-7zM48.500 4v-2h7v8h-2" />
          <path d="M92 2l10 10M102 2L92 12" strokeWidth="1.100" />
        </svg>
      </div>

      <div className="flex h-[23px] shrink-0 items-center bg-[#535353] pb-[1px] pl-[3px] text-[12px] text-white">
        <svg width="15" height="15" shapeRendering="crispEdges"><path d="M.5.5h11l3 3v11H.5z" fill="#fff" stroke="#000" /><path d="M2 2h8v3H2z" fill="#ffef00" /><path d="M3 7h6v5H3z" fill="#0c9c2c" /><path d="M9 9l4-3v6z" fill="#e0e" /></svg>
        <div className="ml-[11px] flex gap-[15px]">
          {MENU.map(([t, w]) => <Fit key={t} w={w}>{t}</Fit>)}
        </div>
        <svg className="mt-[6px] mr-[5px] ml-auto" width="40" height="12" fill="none" stroke="#aab0bd">
          <path d="M0 9.500h7" strokeWidth="2" /><path d="M15.500 4.500h6v5h-6zM17.500 4v-2h6v5h-2" /><path d="M33 2l6 8M39 2l-6 8" strokeWidth="2" />
        </svg>
      </div>

      <div className="flex h-[138px] shrink-0 flex-col gap-px bg-[#535353]">
        <div className="flex">
          <Bar w="w-[550px]" items={["new", "open", "save", "gear", "lock", "gearIn", "gearOut", T("Load Toolbar State", 96, 103), T("Save Toolbar State", 95, 106)]} />
          <Bar w="w-[1311px]" cls="ml-px" items={["crane", "wandOval", "wandElbow", "wandDrop", "wandTee", "pipeDrop", "blueHub", T("Remote Area Table", 95, 104, true), "redTable", "plusPipe", T("Analysis Reports...", 93, 102), "grayHead", T("Keep Hydraulically Most Demanding Area", 211, 219, true), T("Riser Tag", 46, 56), T("Update Riser Tags", 92, 102, true), "tag3wand", "tag3loop", T("Renumber...", 62, 71, true), "net", T("Cleanup", 43, 53, true)]} />
        </div>
        <Bar w="w-[1867px]" items={["area", "redPipe", "yellowTee", "cap", "dshape", "oval", "cross", "elbow", "disc", "swing", T("Mechanical Cross", 89, 97), T("Mechanical Tee", 78, 88), "reducer", T("Saddle", 35, 44), T("Seismic Flex", 60, 70), "teeFit", "coupling", "valveR", "nipple", "redValve", "headA", "headB", "headC", "ball", T("Hydraulic Wormhole", 104, 112), "hydrant", T("Strainer", 40, 51), "tower", "redCross", "hangerRed", "hangerBox", T("Hanger Assembly...", 96, 105), "hangerGray", "crossGray", T("Parts Profile...", 70, 80)]} />
        <div className="flex">
          <Bar w="w-[571px]" items={[T("Create Detail...", 74, 84, true), "shot", "shotSel", T("Hide Layers", 58, 66, true), T("Isolate Layers", 68, 77, true), T("Unisolate Layers", 83, 92, true), T("Interference Checking...", 122, 132, true)]} />
          <Bar w="w-[461px]" items={[T("Hydraulic Calculations...", 122, 132), "chart", "book", "sheet", "printer", "plan", T("Print", 24, 33), "print"]} />
          <Bar w="w-[386px]" items={["lifts", T("Elevate to Pipes", 80, 89, true), T("Elevate Beams...", 79, 88), "beamA", "beamB", "beamC"]} />
          <Bar w="w-[436px]" items={["ibeam", "callout", "star", "ABC", "A", "iso", "cloud", T("Sprinkler Legend", 87, 96)]} />
        </div>
      </div>

      <div className="flex h-[803px] shrink-0 items-stretch">
        <div className="flex w-[1872px] shrink-0 flex-col">
          <div className="flex h-[783px] shrink-0 gap-x-[4px]">
            <div className="flex w-[221px] shrink-0 flex-col">
              <div className="flex h-[760px] shrink-0 flex-col border border-[#e4e4e4] bg-[#f0f0f0]">
                <PanelHead title="Layers" w={30} />
                <div className="mx-[2px] mt-[3px] flex grow flex-col overflow-hidden bg-white">
                  <MiniBar>
                    <div className="flex items-center pl-[8px]">
                      <Icon name="layerNew" cls="h-[30px] w-[32px]" />
                      <Icon name="layerDel" cls="ml-[12px] h-[30px] w-[32px]" />
                      <div className="mx-[9px] h-[26px] w-px bg-[#6d7480] shadow-[1px_0_0_#e8e8e8]" />
                      <Icon name="layerE" cls="h-[30px] w-[32px]" />
                      <Icon name="props" cls="ml-[12px] h-[30px] w-[32px]" />
                      <div className="mx-[9px] h-[26px] w-px bg-[#6d7480] shadow-[1px_0_0_#e8e8e8]" />
                      <Icon name="checks" cls="h-[30px] w-[28px]" />
                    </div>
                  </MiniBar>
                  <HeadRow>
                    <Col cls="w-[100px] pl-[5px]"><Fit w={29}>Name</Fit></Col>
                    <Col cls="w-[20px] pl-[5px]">V.</Col>
                    <Col cls="w-[20px] pl-[5px]">S.</Col>
                    <Col cls="w-[20px] pl-[5px]">A.</Col>
                    <Col cls="w-[20px] pl-[5px]">C.</Col>
                    <Col cls="w-[60px] pl-[5px]"><Fit w={30}>Eleme</Fit></Col>
                  </HeadRow>
                  <div className="text-[12px]">{LAYERS.map((_, i) => <LayerRow key={i} i={i} />)}</div>
                </div>
                <div className="mx-[2px]"><Splitter w="w-[153px]" /></div>
              </div>
              <div className="flex h-[23px] shrink-0 items-start pl-[4px] text-[12px] text-white">
                <div className="flex h-[21px] w-[26px] items-center justify-center rounded-b-[3px] bg-[#f2f6f8] text-black"><Fit w={19}>La...</Fit></div>
                <div className="flex h-[22px] items-center gap-[8px] pl-[8px]">
                  <Fit w={22}>De...</Fit><Fit w={22}>De...</Fit><Fit w={22}>Ne...</Fit><Fit w={20}>Te...</Fit><Fit w={24}>Tra...</Fit><Fit w={22}>Fa...</Fit>
                </div>
              </div>
            </div>

            <div className="flex w-[197px] shrink-0 flex-col overflow-hidden bg-white pt-px">
              <PanelHead title="Alerts" w={28} />
              <MiniBar>
                <Cell name="refresh" w="w-[50px]" /><Cell name="xGray" w="w-[37px]" /><Cell name="aX" w="w-[50px]" /><Cell name="cX" w="w-[38px]" /><Cell name="propsGray" w="w-[44px]" />
              </MiniBar>
              <HeadRow>
                <Col cls="w-[84px] pl-[5px]"><Fit w={44}>Location</Fit></Col>
                <Col cls="w-[42px] pl-[5px]"><Fit w={29}>Inte...</Fit></Col>
                <Col cls="w-[29px] pl-[5px]"><Fit w={16}>C...</Fit></Col>
                <Col cls="w-[43px] pl-[5px]"><Fit w={32}>Status</Fit></Col>
              </HeadRow>
              <div className="h-[540px] shrink-0" />
              <Splitter w="w-[161px]" />
            </div>

            <div className="flex w-[192px] shrink-0 flex-col overflow-hidden bg-white pt-px">
              <PanelHead title="Symbols" w={42} />
              <HeadRow>
                <Col cls="w-[100px] pl-[5px]"><Fit w={29}>Name</Fit></Col>
                <Col cls="w-[50px] pl-[6px]"><Fit w={32}>Count</Fit></Col>
                <Col cls="w-[60px] pl-[5px]"><Fit w={37}>Eleme...</Fit></Col>
              </HeadRow>
              <div className="h-[632px] shrink-0 text-[12px]">
                {([["Default Sym...", 73, "2"], ["Long-Eared ...", 73, "6"]] as [string, number, string][]).map(([t, w, n]) => (
                  <div key={t} className="flex h-[17px] items-center pl-[2px]">
                    <svg width="16" height="16" shapeRendering="crispEdges"><path d="M1.500 .5h12l2 2v13H.5v-13z" fill="#0f0" stroke="#080" /><path d="M3 3h3v4H3zM8 2h1v1H8zM11 2h1v1h-1zM14 3h1v1h-1zM6 6h3v1H6zM8 8h5v5H9v-1H8zM3 9h2v4H3z" fill="#fff" /></svg>
                    <div className="w-[87px] pl-[2px]"><Fit w={w}>{t}</Fit></div>
                    <span className="w-[50px]">0</span>
                    <span>{n}</span>
                  </div>
                ))}
              </div>
              <Splitter w="w-[152px]" />
              <svg width="192" height="96" fill="none" stroke="#000" strokeWidth="2.500" shapeRendering="crispEdges">
                <path d="M8 32.500h66Q75 11 96 10.500Q117 11 118 32.500h66M8 64.500h66Q75 87 96 87.500Q117 87 118 64.500h66" />
              </svg>
            </div>

            <div className="flex w-[168px] shrink-0 flex-col overflow-hidden bg-white pt-px">
              <PanelHead title="Select" w={29} />
              <MiniBar>
                <Cell name="bulbA" w="w-[47px]" /><Cell name="bulbB" w="w-[43px]" />
                <Btn w="w-[42px]"><Icon name="funnelG" cls="h-[30px] w-[30px]" /></Btn>
                <Cell name="funnelY" />
              </MiniBar>
              <HeadRow>
                <Col cls="w-[134px] pl-[5px]"><Fit w={41}>Element</Fit></Col>
                <Col cls="w-[80px] pl-[8px]"><Fit w={32}>Count</Fit></Col>
              </HeadRow>
              <div className="grow" />
              <Splitter w="w-[126px]" />
            </div>

            <PartsPicker />

            <div className="ml-[1px] flex w-[796px] shrink-0 flex-col">
              <div className="flex h-[20px] items-end">
                <div className="ml-[3px] flex h-[18px] w-[131px] items-center rounded-t-[3px] bg-linear-to-b from-[#f7fafb] to-[#d5dbdf] pl-[4px] text-[11.500px] font-bold">
                  <Fit w={105}>Match Elevation.cad</Fit>
                  <svg className="ml-[8px]" width="9" height="9" stroke="#333" strokeWidth="1.300"><path d="M1 1l7 7M8 1L1 8" /></svg>
                </div>
                <div className="mr-[8px] mb-[8px] ml-auto flex gap-[10px] text-[6px] text-[#333]"><span>◁</span><span>▷</span></div>
              </div>
              <div className="flex h-[763px] flex-col border-2 border-[#e8e8e8] bg-[#535353] p-[2px]">
                <div className="flex h-[755px] flex-col border-2 border-b-0 border-[#8a8a8a] bg-[#777]">
                  <div className="flex h-[716px]">
                    <Drawing />
                    <div className="flex w-[18px] items-center justify-center bg-[#f0f0f0] pb-[4px]"><div className="h-[15px] w-[2px] bg-[#868686]" /></div>
                  </div>
                  <div className="flex h-[16px] shrink-0 items-center justify-center bg-[#f0f0f0] pr-[18px]"><div className="h-[2px] w-[17px] bg-[#868686]" /></div>
                  <div className="flex h-[19px] items-center bg-linear-to-b from-[#4c4c4c] to-[#777] to-40%">
                    <div className="flex gap-[3px] pl-[1px]">
                      {["M3 3v7M9 3v7L5 6.500z", "M8 3v7L4 6.500z", "M5 3v7l4-3.500z", "M4 3v7l4-3.500zM10 3v7"].map((d) => (
                        <svg key={d} width="13" height="14" className="bg-[#e6e6e6]" shapeRendering="crispEdges"><path d={d} fill="#555" stroke="#555" /></svg>
                      ))}
                    </div>
                    <svg className="ml-[5px]" width="112" height="18">
                      <path d="M46 17L58 0h47L92 17z" fill="#cfd6e0" stroke="#999" />
                      <path d="M0 0h53L42 17H3z" fill="#fdfdfd" />
                      <text x="7" y="13" textLength="34" className="text-[11.500px] font-bold">Model</text>
                      <text x="54" y="13" textLength="37" className="text-[11.500px]">Sheet 1</text>
                    </svg>
                  </div>
                </div>
              </div>
            </div>
          </div>

          <div className="relative flex h-[20px] shrink-0 items-center bg-linear-to-b from-[#434854] from-40% to-[#2e2e2e] to-45% pt-[2px] pl-[4px] text-[12px] text-white">
            <Fit w={104}>Pitch the camera up.</Fit>
            <div className="ml-auto flex items-center">
              {([["0 selected", 50, "w-[63px]"], ["Elev1: 15'-0", 57, "w-[69px]"], ["ø 2 (2.1570)", 58, "w-[64px]"], ["# Off", 27, "w-[33px]"], ["Foot", 24, "w-[31px]"]] as [string, number, string][]).map(([t, w, cw]) => (
                <div key={t} className={`flex h-[14px] items-center border-l border-[#666] pl-[4px] ${cw}`}><Fit w={w}>{t}</Fit></div>
              ))}
            </div>
            <div className="absolute top-[-9px] left-[1299px] z-10 flex h-[41px] w-[172px] border border-[#767676] bg-linear-to-b from-white to-[#cfd2dc] pl-[6px] text-[#4c4c4c]">
              <Icon name="aUp" cls="mt-[3px] h-[13px] w-[13px]" />
              <div className="pl-[8px]">
                <div className="mt-[3px] h-[19px] text-[11.500px] font-semibold"><Fit w={137}>Pitch Camera Up (Ctrl+Up)</Fit></div>
                <Fit w={104}>Pitch the camera up.</Fit>
              </div>
            </div>
          </div>
        </div>

        <div className="flex w-[48px] shrink-0 flex-col">
          <div className={`${VBAR} h-[233px]`}>
            <VGrip />
            <div className="mt-[7px] h-[66px] shrink-0"><VText>Import DWG</VText></div>
            <div className="mt-[7px]"><Icon name="dwg" /></div>
            <div className="mt-[9px]"><Icon name="pages" /></div>
            <div className="mt-[9px]"><Icon name="cubes" cls="h-[31px] w-[31px]" /></div>
            <VHandle />
          </div>
          <div className={`${VBAR} h-[341px]`}>
            <VGrip />
            <div className="mt-[5px] flex flex-col items-center">
              <Icon name="vArm" />
              <Icon name="vWand" cls="mt-[10px] h-8 w-8" />
              <div className="mt-[7px] h-px w-[28px] bg-[#555b66]" />
              <Icon name="vTee" cls="mt-[10px] h-8 w-8" />
              <Icon name="vChev" cls="mt-[9px] h-8 w-8" />
              <div className="mt-[8px] h-px w-[28px] bg-[#555b66]" />
              <Icon name="vMess" cls="mt-[10px] h-8 w-8" />
              <Icon name="vJack" cls="mt-[9px] h-8 w-8" />
              <Icon name="vNodes" cls="mt-[12px] h-8 w-8" />
            </div>
            <VHandle />
          </div>
          <div className={`${VBAR} h-[222px]`}>
            <VGrip />
            <div className="mt-[2px]"><Btn w="w-[43px]"><Icon name="cube" /></Btn></div>
            <Icon name="wire" cls="mt-[5px] h-8 w-8" />
            <div className="mt-[10px] h-[34px] shrink-0"><VText>GLSL</VText></div>
            <div className="flex h-[64px] w-[43px] shrink-0 items-center justify-center rounded-[2px] border border-[#d9b06a] bg-linear-to-b from-[#fbb35e] to-[#fee08a]"><VText>OpenGL®</VText></div>
            <VHandle />
          </div>
        </div>
      </div>

      <div className="flex h-[45px] shrink-0 pb-[1px]">
        <Bar w="w-[795px]">
          <Cell name="win" />
          <Btn w="w-[38px]"><Fit w={30}>Layers</Fit></Btn>
          <Btn w="w-[65px]"><Fit w={58}>Parts Picker</Fit></Btn>
          <Btn w="w-[36px]"><Fit w={29}>Alerts</Fit></Btn>
          <Btn w="w-[37px]"><Fit w={30}>Select</Fit></Btn>
          <Btn w="w-[49px]"><Fit w={42}>Symbols</Fit></Btn>
          <Cell name="tri" />
          <Btn w="w-[42px]"><Icon name="centre" cls="h-[30px] w-[30px]" /></Btn>
          <Btn w="w-[42px]"><Icon name="ends" cls="h-[30px] w-[30px]" /></Btn>
          <Cell name="perp" /><Cell name="perpB" /><Cell name="inter" /><Cell name="interB" />
          <Btn w="w-[42px]"><Icon name="near" cls="h-[30px] w-[30px]" /></Btn>
          <Btn w="w-[42px]"><Icon name="quad" cls="h-[30px] w-[30px]" /></Btn>
          <Cell name="poly" />
          <Btn w="w-[42px]"><Icon name="magnet" cls="h-[30px] w-[30px]" /></Btn>
        </Bar>
        <Bar w="w-[185px]" cls="ml-px">
          <Cell name="math" w="w-[42px]" /><Cell name="right" w="w-[40px]" />
          <div className="ml-[6px] flex h-[16px] w-[60px] items-center bg-white pl-[1px] text-[12px]">,,10</div>
        </Bar>
        <Bar w="w-[938px]" cls="ml-px" more>
          <Cell name="target" w="w-[42px]" />
          <Btn w="w-[42px]" on={false}><Icon name="wheel" cls="h-[32px] w-[32px]" /></Btn>
          <Cell name="pick" />
          <div className="flex w-[87px] shrink-0 justify-center"><Fit w={77}>Lock On Target</Fit></div>
          <Cell name="magUp" /><Cell name="magDown" />
          <Btn w="w-[42px]"><Icon name="aUp" cls="h-[30px] w-[30px]" /></Btn>
          {["aLeft", "aCcw", "aDown", "aRight", "aCw", "spinA", "spinB", "homeA", "homeB", "homeC", "homeD", "expand"].map((n) => <Cell key={n} name={n} />)}
        </Bar>
      </div>
    </div>
  );
}
